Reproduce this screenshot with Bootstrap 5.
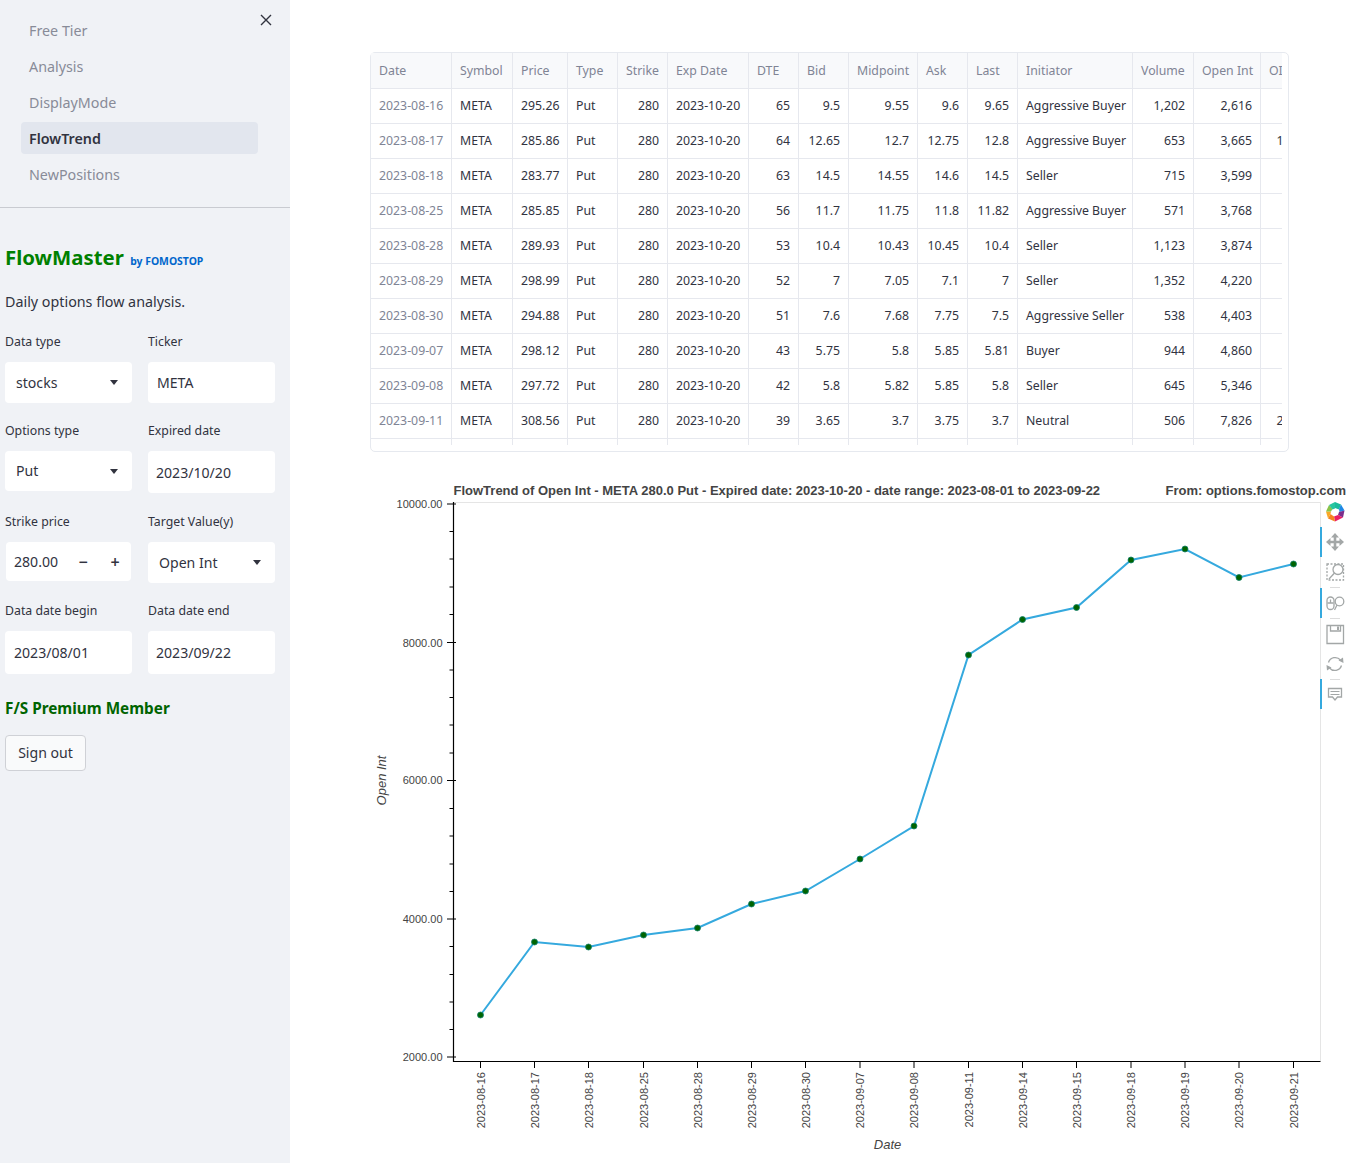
<!DOCTYPE html>
<html lang="en">
<head>
<meta charset="utf-8">
<title>FlowTrend</title>
<link href="https://cdn.jsdelivr.net/npm/bootstrap@5.3.0/dist/css/bootstrap.min.css" rel="stylesheet">
<style>
html,body{height:1163px;overflow:hidden;background:#fff}
body{font-family:"Noto Sans","Liberation Sans",sans-serif;color:#31333f;font-size:14.3px}
.fm-side{width:290px;height:1163px;background:#f0f2f6;flex:none}
.fm-close{top:14px;left:260px;width:12px;height:12px}
.fm-nav{padding:14px 32px 13px 21px}
.fm-nav .nav-link{height:32px;margin-bottom:4px;padding:1px 8px 0;display:flex;align-items:center;color:#888b98;font-size:14.3px;border-radius:4px}
.fm-nav .nav-link.active{background:#e2e6ee;color:#31333f;font-weight:600}
.fm-rule{margin:0;border-top:1px solid #c9cbd1;opacity:1}
.fm-body{padding:0 0 0 5px;width:275px}
.fm-title{font-size:20.4px;font-weight:700;color:#008000;margin:33px 0 0;line-height:32px;height:32px}
.fm-title span{font-size:10.4px;color:#0066cc;font-weight:700;margin-left:1px}
.fm-sub{margin:19px 0 0;line-height:20px;height:20px;font-size:14.3px}
.fm-form{margin-top:20px}
.fm-label{display:block;font-size:12.3px;line-height:20px;height:20px;margin:0 0 10px}
.fm-row{margin-bottom:18px;--bs-gutter-x:16px}
.fm-row.fm-tall{margin-bottom:19px}
.fm-ctl{background:#fff;border:0;border-radius:4px;font-size:14.1px;color:#31333f;box-shadow:none;line-height:20px}
.fm-h41{height:41px}.fm-h40{height:40px}.fm-h42{height:42px}.fm-h43{height:43px}.fm-h39{height:39px}
.fm-pad8{padding:0 8px}.fm-pad9{padding:0 9px}
input.fm-ctl:focus{background:#fff;box-shadow:none}
.fm-sel{padding:0 14.5px 0 11px}
.fm-caret{width:0;height:0;border-left:4.5px solid transparent;border-right:4.5px solid transparent;border-top:5px solid #31333f}
.fm-num{margin-left:1px;margin-right:1px;padding:0 10.5px 0 8px;margin-top:1px}
.fm-num b{font-weight:600;font-size:16px;line-height:1;width:11px;text-align:center}
.fm-num b+b{margin-left:21px}
.fm-prem{font-size:15.3px;font-weight:700;color:#006400;margin:23px 0 0;line-height:22px;height:22px}
.fm-out{margin-top:16px;width:81px;height:36px;padding:0;background:#f9fafb;border:1px solid #cfd1d6;color:#31333f;font-size:14.1px;border-radius:4px}
.fm-main{flex:1 1 auto;padding:52px 0 0 80px;min-width:0}
.fm-grid{width:919px;height:400px;border:1px solid #e6e9ef;border-radius:5px;padding:0 6px 6px 0}
.fm-clip{overflow:hidden;height:392px;width:100%}
.fm-table{table-layout:fixed;border-collapse:separate;border-spacing:0;width:946px;margin:0;font-size:12.3px;color:#31333f}
.fm-table th,.fm-table td{padding:0 8px;border-right:1px solid #e6e8ee;border-bottom:1px solid #e6e8ee;height:35px;white-space:nowrap;overflow:hidden;box-shadow:none;background:transparent;color:#31333f;vertical-align:middle}
.fm-table th{height:36px;padding-top:1px;background:#f8f9fb;color:#808495;font-weight:400;text-align:left}
.fm-table td:first-child{color:#808495}
.fm-table col:nth-child(1){width:81px}.fm-table col:nth-child(2){width:61px}.fm-table col:nth-child(3){width:55px}
.fm-table col:nth-child(4){width:50px}.fm-table col:nth-child(5){width:50px}.fm-table col:nth-child(6){width:81px}
.fm-table col:nth-child(7){width:50px}.fm-table col:nth-child(8){width:50px}.fm-table col:nth-child(9){width:69px}
.fm-table col:nth-child(10){width:50px}.fm-table col:nth-child(11){width:50px}.fm-table col:nth-child(12){width:115px}
.fm-table col:nth-child(13){width:61px}.fm-table col:nth-child(14){width:67px}.fm-table col:nth-child(15){width:56px}
.fm-plot{display:block;margin-top:18px;margin-left:0}
.fm-plot text{font-family:"Liberation Sans",Arial,sans-serif;fill:#444}
.fm-tick{font-size:11px}
.fm-head{font-size:13px;font-weight:700}
.fm-axis{font-size:13px;font-style:italic}
.fm-tool{fill:none;stroke:#a3a7a7;stroke-width:1.3}
</style>
</head>
<body>
<div class="d-flex">
  <aside class="fm-side position-relative">
    <svg class="fm-close position-absolute" viewBox="0 0 12 12"><path d="M1 1l10 10M11 1L1 11" stroke="#31333f" stroke-width="1.4" fill="none"/></svg>
    <nav class="nav flex-column fm-nav">
      <a class="nav-link" href="#">Free Tier</a>
      <a class="nav-link" href="#">Analysis</a>
      <a class="nav-link" href="#">DisplayMode</a>
      <a class="nav-link active" href="#">FlowTrend</a>
      <a class="nav-link" href="#">NewPositions</a>
    </nav>
    <hr class="fm-rule">
    <div class="fm-body">
      <h1 class="fm-title">FlowMaster <span>by FOMOSTOP</span></h1>
      <p class="fm-sub">Daily options flow analysis.</p>
      <div class="fm-form">
        <div class="row fm-row align-items-start">
          <div class="col-6"><label class="fm-label">Data type</label><div class="fm-ctl fm-h41 fm-sel d-flex align-items-center justify-content-between">stocks<span class="fm-caret"></span></div></div>
          <div class="col-6"><label class="fm-label">Ticker</label><input class="form-control fm-ctl fm-h41 fm-pad9" value="META"></div>
        </div>
        <div class="row fm-row fm-tall align-items-start">
          <div class="col-6"><label class="fm-label">Options type</label><div class="fm-ctl fm-h40 fm-sel d-flex align-items-center justify-content-between">Put<span class="fm-caret"></span></div></div>
          <div class="col-6"><label class="fm-label">Expired date</label><input class="form-control fm-ctl fm-h42 fm-pad8" value="2023/10/20"></div>
        </div>
        <div class="row fm-row align-items-start">
          <div class="col-6"><label class="fm-label">Strike price</label><div class="fm-ctl fm-h39 fm-num d-flex align-items-center"><span class="flex-grow-1">280.00</span><b>−</b><b>+</b></div></div>
          <div class="col-6"><label class="fm-label">Target Value(y)</label><div class="fm-ctl fm-h41 fm-sel d-flex align-items-center justify-content-between">Open Int<span class="fm-caret"></span></div></div>
        </div>
        <div class="row fm-row align-items-start">
          <div class="col-6"><label class="fm-label">Data date begin</label><input class="form-control fm-ctl fm-h43 fm-pad9" value="2023/08/01"></div>
          <div class="col-6"><label class="fm-label">Data date end</label><input class="form-control fm-ctl fm-h43 fm-pad8" value="2023/09/22"></div>
        </div>
      </div>
      <h2 class="fm-prem">F/S Premium Member</h2>
      <button type="button" class="btn fm-out">Sign out</button>
    </div>
  </aside>
  <main class="fm-main">
    <div class="fm-grid">
      <div class="fm-clip">
        <table class="table fm-table">
          <colgroup><col><col><col><col><col><col><col><col><col><col><col><col><col><col><col></colgroup>
          <thead><tr><th>Date</th><th>Symbol</th><th>Price</th><th>Type</th><th>Strike</th><th>Exp Date</th><th>DTE</th><th>Bid</th><th>Midpoint</th><th>Ask</th><th>Last</th><th>Initiator</th><th>Volume</th><th>Open Int</th><th>OI Change</th></tr></thead>
          <tbody>
            <tr><td>2023-08-16</td><td>META</td><td>295.26</td><td>Put</td><td class="text-end">280</td><td>2023-10-20</td><td class="text-end">65</td><td class="text-end">9.5</td><td class="text-end">9.55</td><td class="text-end">9.6</td><td class="text-end">9.65</td><td>Aggressive Buyer</td><td class="text-end">1,202</td><td class="text-end">2,616</td><td class="text-end"></td></tr>
            <tr><td>2023-08-17</td><td>META</td><td>285.86</td><td>Put</td><td class="text-end">280</td><td>2023-10-20</td><td class="text-end">64</td><td class="text-end">12.65</td><td class="text-end">12.7</td><td class="text-end">12.75</td><td class="text-end">12.8</td><td>Aggressive Buyer</td><td class="text-end">653</td><td class="text-end">3,665</td><td class="text-end">1,049</td></tr>
            <tr><td>2023-08-18</td><td>META</td><td>283.77</td><td>Put</td><td class="text-end">280</td><td>2023-10-20</td><td class="text-end">63</td><td class="text-end">14.5</td><td class="text-end">14.55</td><td class="text-end">14.6</td><td class="text-end">14.5</td><td>Seller</td><td class="text-end">715</td><td class="text-end">3,599</td><td class="text-end">-66</td></tr>
            <tr><td>2023-08-25</td><td>META</td><td>285.85</td><td>Put</td><td class="text-end">280</td><td>2023-10-20</td><td class="text-end">56</td><td class="text-end">11.7</td><td class="text-end">11.75</td><td class="text-end">11.8</td><td class="text-end">11.82</td><td>Aggressive Buyer</td><td class="text-end">571</td><td class="text-end">3,768</td><td class="text-end">169</td></tr>
            <tr><td>2023-08-28</td><td>META</td><td>289.93</td><td>Put</td><td class="text-end">280</td><td>2023-10-20</td><td class="text-end">53</td><td class="text-end">10.4</td><td class="text-end">10.43</td><td class="text-end">10.45</td><td class="text-end">10.4</td><td>Seller</td><td class="text-end">1,123</td><td class="text-end">3,874</td><td class="text-end">106</td></tr>
            <tr><td>2023-08-29</td><td>META</td><td>298.99</td><td>Put</td><td class="text-end">280</td><td>2023-10-20</td><td class="text-end">52</td><td class="text-end">7</td><td class="text-end">7.05</td><td class="text-end">7.1</td><td class="text-end">7</td><td>Seller</td><td class="text-end">1,352</td><td class="text-end">4,220</td><td class="text-end">346</td></tr>
            <tr><td>2023-08-30</td><td>META</td><td>294.88</td><td>Put</td><td class="text-end">280</td><td>2023-10-20</td><td class="text-end">51</td><td class="text-end">7.6</td><td class="text-end">7.68</td><td class="text-end">7.75</td><td class="text-end">7.5</td><td>Aggressive Seller</td><td class="text-end">538</td><td class="text-end">4,403</td><td class="text-end">183</td></tr>
            <tr><td>2023-09-07</td><td>META</td><td>298.12</td><td>Put</td><td class="text-end">280</td><td>2023-10-20</td><td class="text-end">43</td><td class="text-end">5.75</td><td class="text-end">5.8</td><td class="text-end">5.85</td><td class="text-end">5.81</td><td>Buyer</td><td class="text-end">944</td><td class="text-end">4,860</td><td class="text-end">457</td></tr>
            <tr><td>2023-09-08</td><td>META</td><td>297.72</td><td>Put</td><td class="text-end">280</td><td>2023-10-20</td><td class="text-end">42</td><td class="text-end">5.8</td><td class="text-end">5.82</td><td class="text-end">5.85</td><td class="text-end">5.8</td><td>Seller</td><td class="text-end">645</td><td class="text-end">5,346</td><td class="text-end">486</td></tr>
            <tr><td>2023-09-11</td><td>META</td><td>308.56</td><td>Put</td><td class="text-end">280</td><td>2023-10-20</td><td class="text-end">39</td><td class="text-end">3.65</td><td class="text-end">3.7</td><td class="text-end">3.75</td><td class="text-end">3.7</td><td>Neutral</td><td class="text-end">506</td><td class="text-end">7,826</td><td class="text-end">2,480</td></tr>
            <tr><td></td><td></td><td></td><td></td><td></td><td></td><td></td><td></td><td></td><td></td><td></td><td></td><td></td><td></td><td></td></tr>
          </tbody>
        </table>
      </div>
    </div>
    <svg class="fm-plot" width="984" height="693" viewBox="370 470 984 693" role="img" aria-label="FlowTrend chart">
      <path d="M453.5 502.5H1320.5V1061" fill="none" stroke="#e5e5e5"/>
      <path d="M453.5 502V1061.5H1320.5" fill="none" stroke="#000" stroke-width="1.2"/>
      <path stroke="#000" fill="none" d="M447 504h9M447 642.5h9M447 780.5h9M447 919h9M447 1057h9
        M449.5 531.5h4M449.5 559h4M449.5 587h4M449.5 614.5h4M449.5 670h4M449.5 697.500h4M449.5 725h4M449.5 753h4M449.5 808.500h4M449.5 836h4M449.5 864h4M449.5 891.500h4M449.5 946.500h4M449.5 974.500h4M449.500 1002h4M449.5 1029.500h4
        M480.500 1061v7M534.500 1061v7M588.500 1061v7M643.500 1061v7M697.500 1061v7M751.500 1061v7M805.500 1061v7M860 1061v7M914 1061v7M968.500 1061v7M1022.500 1061v7M1076.500 1061v7M1131 1061v7M1185 1061v7M1239 1061v7M1293.500 1061v7"/>
      <text class="fm-head" x="453.500" y="495">FlowTrend of Open Int - META 280.0 Put - Expired date: 2023-10-20 - date range: 2023-08-01 to 2023-09-22</text>
      <text class="fm-head" x="1346" y="495" text-anchor="end">From: options.fomostop.com</text>
      <g class="fm-tick" text-anchor="end">
        <text x="442.500" y="508">10000.00</text><text x="442.500" y="647">8000.00</text><text x="442.500" y="784">6000.00</text><text x="442.500" y="923">4000.00</text><text x="442.500" y="1061">2000.00</text>
      </g>
      <g class="fm-tick" text-anchor="end">
        <text transform="translate(484.500 1072) rotate(-90)">2023-08-16</text>
        <text transform="translate(538.500 1072) rotate(-90)">2023-08-17</text>
        <text transform="translate(592.500 1072) rotate(-90)">2023-08-18</text>
        <text transform="translate(647.500 1072) rotate(-90)">2023-08-25</text>
        <text transform="translate(701.500 1072) rotate(-90)">2023-08-28</text>
        <text transform="translate(755.500 1072) rotate(-90)">2023-08-29</text>
        <text transform="translate(809.500 1072) rotate(-90)">2023-08-30</text>
        <text transform="translate(864 1072) rotate(-90)">2023-09-07</text>
        <text transform="translate(918 1072) rotate(-90)">2023-09-08</text>
        <text transform="translate(972.500 1072) rotate(-90)">2023-09-11</text>
        <text transform="translate(1026.500 1072) rotate(-90)">2023-09-14</text>
        <text transform="translate(1080.500 1072) rotate(-90)">2023-09-15</text>
        <text transform="translate(1135 1072) rotate(-90)">2023-09-18</text>
        <text transform="translate(1189 1072) rotate(-90)">2023-09-19</text>
        <text transform="translate(1243 1072) rotate(-90)">2023-09-20</text>
        <text transform="translate(1297.500 1072) rotate(-90)">2023-09-21</text>
      </g>
      <text class="fm-axis" transform="translate(385.500 780.500) rotate(-90)" text-anchor="middle">Open Int</text>
      <text class="fm-axis" x="887.500" y="1149" text-anchor="middle">Date</text>
      <polyline fill="none" stroke="#35a9de" stroke-width="2" points="480.500,1015 534.500,942 588.500,947 643.500,935 697.500,928 751.500,904 805.500,891 860,859 914,826 968.500,655 1022.500,619.500 1076.500,607.500 1131,560 1185,549 1239,577.500 1293.500,564"/>
      <g fill="#006400" stroke="#0f7f6a" stroke-width=".8">
        <circle cx="480.500" cy="1015" r="3"/><circle cx="534.500" cy="942" r="3"/><circle cx="588.500" cy="947" r="3"/><circle cx="643.500" cy="935" r="3"/><circle cx="697.500" cy="928" r="3"/><circle cx="751.500" cy="904" r="3"/><circle cx="805.500" cy="891" r="3"/><circle cx="860" cy="859" r="3"/><circle cx="914" cy="826" r="3"/><circle cx="968.500" cy="655" r="3"/><circle cx="1022.500" cy="619.500" r="3"/><circle cx="1076.500" cy="607.500" r="3"/><circle cx="1131" cy="560" r="3"/><circle cx="1185" cy="549" r="3"/><circle cx="1239" cy="577.500" r="3"/><circle cx="1293.500" cy="564" r="3"/>
      </g>
      <!-- toolbar -->
      <g>
        <path fill="#1abc9c" d="M1335 502l6 2.500-2 5-4-1.500z"/>
        <path fill="#1e88e5" d="M1341 504.500l3.500 6-5 1.500-.5-3z"/>
        <path fill="#7b2d8b" d="M1344.500 510.500l-1.500 7-5-2.500 1-3z"/>
        <path fill="#e91e63" d="M1343 517.500l-8 4-1-5 4-1.500z"/>
        <path fill="#f58220" d="M1335 521.500l-7-3 2.500-4.500 3.500 2.500z"/>
        <path fill="#f9a825" d="M1328 518.500l-2-7 5 0 -.5 2.500z"/>
        <path fill="#8bc34a" d="M1326 511.500l3-6.500 3.500 4-1.500 2.500z"/>
        <path fill="#26c6a0" d="M1329 505l6-3 0 6.500-2.500 1z"/>
      </g>
      <path stroke="#35a9de" stroke-width="2" d="M1321 527v30M1321 588v30M1321 679v30"/>
      <path stroke="#dcdcdc" d="M1330 587.500h10M1330 618.500h10M1330 679.500h10"/>
      <path stroke="#a3a7a7" stroke-width="2.600" fill="none" d="M1335 536v12M1329 542h12"/>
      <path fill="#a3a7a7" d="M1335 533l4 4.500h-8zM1335 551l4-4.500h-8zM1326 542l4.500-4v8zM1344 542l-4.500-4v8z"/>
      <rect class="fm-tool" x="1327" y="564" width="16.500" height="16" stroke-dasharray="2 1.500" stroke-width="1"/>
      <circle class="fm-tool" cx="1338" cy="569.500" r="5" stroke-width="1.700"/>
      <path class="fm-tool" d="M1334.500 573l-5.500 6" stroke-width="2.200"/>
      <rect class="fm-tool" x="1327" y="597" width="7" height="12.500" rx="3.500" stroke-width="1.500"/>
      <path class="fm-tool" d="M1327.500 603h6M1330.500 599.500v3.500"/>
      <circle class="fm-tool" cx="1339.500" cy="601.500" r="4.300" stroke-width="1.600"/>
      <path class="fm-tool" d="M1337 605l-2.500 5" stroke-width="1.800"/>
      <path class="fm-tool" d="M1327 625.500h16.500v18h-16.500z"/>
      <path class="fm-tool" d="M1330.500 625.500v5.500h10v-5.500"/>
      <path fill="#a3a7a7" d="M1337 626.500h2v3.500h-2z"/>
      <path class="fm-tool" d="M1328.500 662.500a7 7 0 0 1 12-2.500M1341.500 665.500a7 7 0 0 1-12 2.500" stroke-width="2"/>
      <path fill="#a3a7a7" d="M1338.500 660.500l4.500-3 .5 5.500zM1331.500 667.500l-4.500 3-.5-5.500z"/>
      <path class="fm-tool" d="M1328.500 688.500h13v8.500h-4l-2.500 3-2.500-3h-4z"/>
      <path stroke="#a3a7a7" d="M1330.500 691.500h9M1330.500 694.500h9"/>
    </svg>
  </main>
</div>
<script src="https://cdn.jsdelivr.net/npm/bootstrap@5.3.0/dist/js/bootstrap.bundle.min.js"></script>
</body>
</html>
